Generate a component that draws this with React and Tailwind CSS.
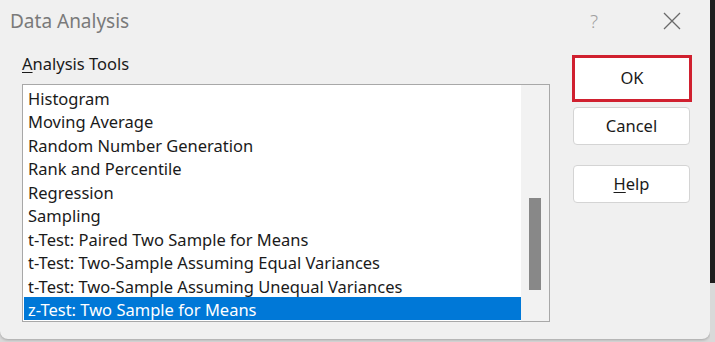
import React from "react";

const items = [
  "Histogram",
  "Moving Average",
  "Random Number Generation",
  "Rank and Percentile",
  "Regression",
  "Sampling",
  "t-Test: Paired Two Sample for Means",
  "t-Test: Two-Sample Assuming Equal Variances",
  "t-Test: Two-Sample Assuming Unequal Variances",
  "z-Test: Two Sample for Means",
];

export default function App() {
  return (
    <div
      className="w-[715px] h-[342px] bg-[#d9d9d9] flex overflow-hidden"
      style={{ fontFamily: '"Noto Sans", "Open Sans", sans-serif' }}
    >
      <div className="w-[710px] h-[339px] bg-[#f0f0f0] rounded-b-[8px] shadow-[0_1px_3px_rgba(0,0,0,0.25)] flex flex-col">
        <div className="h-[42px] flex items-center pl-[10px]">
          <div className="text-[19px] text-[#7a7a7a] pt-[1px]">Data Analysis</div>
          <div className="ml-auto text-[19px] text-[#a0a0a0] font-light w-[20px] mr-[52px]">?</div>
          <svg width="20" height="20" viewBox="0 0 20 20" className="mr-[28px]">
            <path d="M2 2 L18 18 M18 2 L2 18" stroke="#6a6a6a" strokeWidth="1.3" fill="none" />
          </svg>
        </div>
        <div className="flex pl-[22px]">
          <div className="flex flex-col">
            <div className="text-[16.5px] text-[#1a1a1a] h-[42px] pt-[11px] leading-[22px]">
              <span className="underline underline-offset-2">A</span>nalysis Tools
            </div>
            <div className="w-[528px] h-[238px] border border-[#a8a8a8] bg-white flex">
              <div className="flex-1 pl-[1px] pt-[1px] flex flex-col">
                {items.map((t, i) => (
                  <div
                    key={t}
                    className={
                      "h-[23.45px] leading-[25px] pl-[4px] text-[16.5px] whitespace-nowrap " +
                      (i === items.length - 1 ? "bg-[#0078d7] text-white" : "text-[#1a1a1a]")
                    }
                  >
                    {t}
                  </div>
                ))}
              </div>
              <div className="w-[28px] bg-[#f2f2f2] flex flex-col items-center pt-[113px]">
                <div className="w-[12px] h-[92px] bg-[#888888]" />
              </div>
            </div>
          </div>
          <div className="flex flex-col ml-[22px] pt-[13px]">
            <div className="w-[120px] h-[47px] border-[3px] border-[#d0202f] bg-white flex items-center justify-center text-[16.5px] text-[#1a1a1a]">
              OK
            </div>
            <div className="w-[117px] h-[38px] mt-[5px] ml-[1px] border border-[#d4d4d4] rounded-[4px] bg-white flex items-center justify-center text-[16.5px] text-[#1a1a1a]">
              Cancel
            </div>
            <div className="w-[117px] h-[38px] mt-[20px] ml-[1px] border border-[#d4d4d4] rounded-[4px] bg-white flex items-center justify-center text-[16.5px] text-[#1a1a1a]">
              <span className="underline underline-offset-2">H</span>elp
            </div>
          </div>
        </div>
      </div>
      <div className="flex-1 flex flex-col">
        <div className="h-[283px] bg-[#1e1e1e]" />
        <div className="flex-1 bg-[#d9d9d9]" />
      </div>
    </div>
  );
}
